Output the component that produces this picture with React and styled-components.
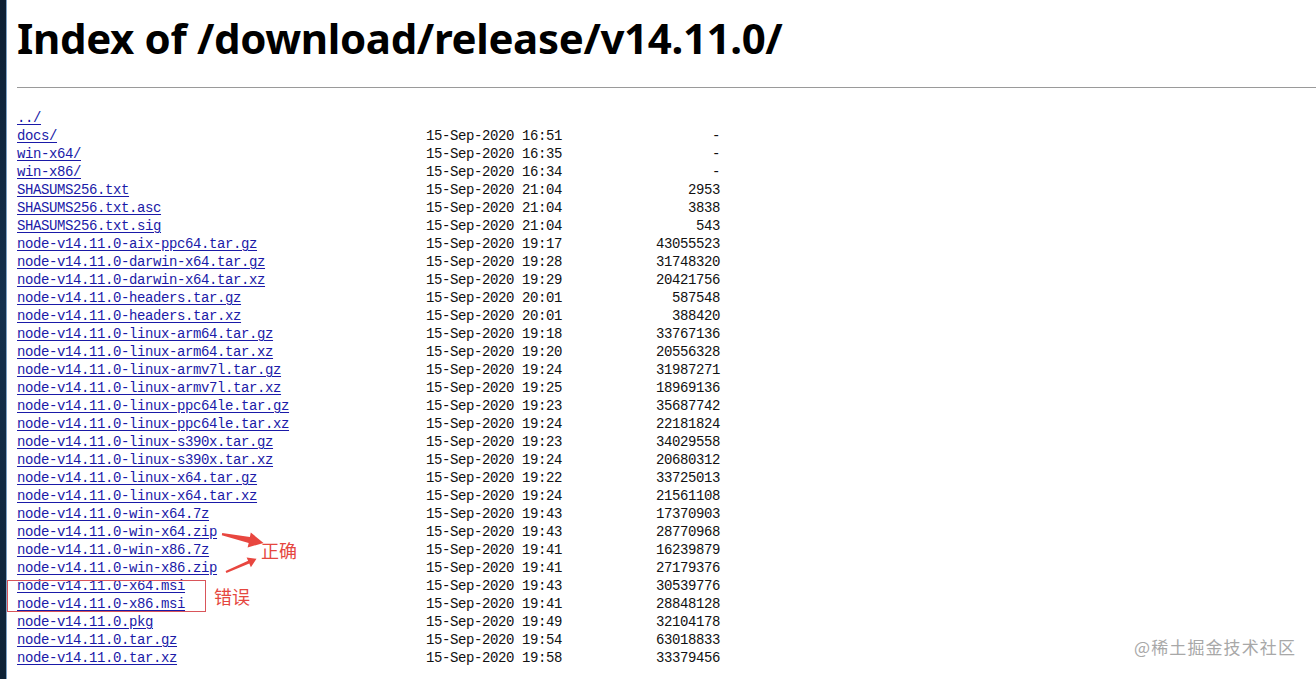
import styled, { createGlobalStyle } from "styled-components";

const GlobalStyle = createGlobalStyle`
  html, body {
    margin: 0;
    padding: 0;
    background: #fff;
  }
  body {
    font-family: "Noto Sans", "Open Sans", sans-serif;
    overflow: hidden;
  }
`;

const files = [
  ["../", "", "", ""],
  ["docs/", "15-Sep-2020", "16:51", "-"],
  ["win-x64/", "15-Sep-2020", "16:35", "-"],
  ["win-x86/", "15-Sep-2020", "16:34", "-"],
  ["SHASUMS256.txt", "15-Sep-2020", "21:04", "2953"],
  ["SHASUMS256.txt.asc", "15-Sep-2020", "21:04", "3838"],
  ["SHASUMS256.txt.sig", "15-Sep-2020", "21:04", "543"],
  ["node-v14.11.0-aix-ppc64.tar.gz", "15-Sep-2020", "19:17", "43055523"],
  ["node-v14.11.0-darwin-x64.tar.gz", "15-Sep-2020", "19:28", "31748320"],
  ["node-v14.11.0-darwin-x64.tar.xz", "15-Sep-2020", "19:29", "20421756"],
  ["node-v14.11.0-headers.tar.gz", "15-Sep-2020", "20:01", "587548"],
  ["node-v14.11.0-headers.tar.xz", "15-Sep-2020", "20:01", "388420"],
  ["node-v14.11.0-linux-arm64.tar.gz", "15-Sep-2020", "19:18", "33767136"],
  ["node-v14.11.0-linux-arm64.tar.xz", "15-Sep-2020", "19:20", "20556328"],
  ["node-v14.11.0-linux-armv7l.tar.gz", "15-Sep-2020", "19:24", "31987271"],
  ["node-v14.11.0-linux-armv7l.tar.xz", "15-Sep-2020", "19:25", "18969136"],
  ["node-v14.11.0-linux-ppc64le.tar.gz", "15-Sep-2020", "19:23", "35687742"],
  ["node-v14.11.0-linux-ppc64le.tar.xz", "15-Sep-2020", "19:24", "22181824"],
  ["node-v14.11.0-linux-s390x.tar.gz", "15-Sep-2020", "19:23", "34029558"],
  ["node-v14.11.0-linux-s390x.tar.xz", "15-Sep-2020", "19:24", "20680312"],
  ["node-v14.11.0-linux-x64.tar.gz", "15-Sep-2020", "19:22", "33725013"],
  ["node-v14.11.0-linux-x64.tar.xz", "15-Sep-2020", "19:24", "21561108"],
  ["node-v14.11.0-win-x64.7z", "15-Sep-2020", "19:43", "17370903"],
  ["node-v14.11.0-win-x64.zip", "15-Sep-2020", "19:43", "28770968"],
  ["node-v14.11.0-win-x86.7z", "15-Sep-2020", "19:41", "16239879"],
  ["node-v14.11.0-win-x86.zip", "15-Sep-2020", "19:41", "27179376"],
  ["node-v14.11.0-x64.msi", "15-Sep-2020", "19:43", "30539776"],
  ["node-v14.11.0-x86.msi", "15-Sep-2020", "19:41", "28848128"],
  ["node-v14.11.0.pkg", "15-Sep-2020", "19:49", "32104178"],
  ["node-v14.11.0.tar.gz", "15-Sep-2020", "19:54", "63018833"],
  ["node-v14.11.0.tar.xz", "15-Sep-2020", "19:58", "33379456"],
];

const App = () => {
  return (
    <Screen>
      <GlobalStyle />
      <Desktop />
      <Page>
        <Title>Index of /download/release/v14.11.0/</Title>
        <Rule />
        <Listing>
          {files.map(([name, date, time, size]) => (
            <Row key={name}>
              <FileLink href="#">{name}</FileLink>
              <Cell>{date ? `${date} ${time}` : ""}</Cell>
              <Size>{size}</Size>
            </Row>
          ))}
        </Listing>
      </Page>

      {/* screenshot annotations */}
      <Marks width="60" height="55" viewBox="215 525 60 55">
        <polygon
          points="222.2,533 249.9,537.1 250.8,532.6 263.5,543 247.6,547.4 248.7,542.9 221.8,535.2"
          fill="#e8463f"
        />
        <polygon
          points="225.6,571 248.1,560.8 246.6,557.4 256.5,558.8 250.9,567.2 249.3,563.6 226.4,573"
          fill="#e8463f"
        />
      </Marks>
      <RightNote>正确</RightNote>
      <WrongBox />
      <WrongNote>错误</WrongNote>
      <Watermark>@稀土掘金技术社区</Watermark>
    </Screen>
  );
};
export default App;

/*Styled Components*/

const Screen = styled.div`
  position: relative;
  display: flex;
  width: 1316px;
  height: 679px;
  overflow: hidden;
  background: #fff;
`;

const Desktop = styled.div`
  flex: 0 0 6px;
  background: linear-gradient(180deg, #0d1f33 0%, #14304d 45%, #0e2236 100%);
  border-right: 1px solid #7fa3c6;
`;

const Page = styled.div`
  flex: 1;
  padding-left: 10px;
`;

const Title = styled.h1`
  margin: 12px 0 0 0;
  font-family: "Noto Sans", "Open Sans", sans-serif;
  font-weight: 700;
  font-size: 42px;
  line-height: 52px;
  color: #000;
  letter-spacing: -0.35px;
`;

const Rule = styled.hr`
  margin: 23px 0 0 0;
  border: none;
  border-top: 1px solid #9a9a9a;
  height: 0;
`;

const Listing = styled.div`
  margin-top: 21px;
  font-family: "Liberation Mono", "DejaVu Sans Mono", monospace;
  font-size: 14px;
  letter-spacing: -0.4px;
  line-height: 18px;
  color: #111;
`;

const Row = styled.div`
  display: grid;
  grid-template-columns: 409px 136px 158px;
  height: 18px;
  white-space: pre;
`;

const FileLink = styled.a`
  color: #1a1aa8;
  text-decoration: underline;
  text-underline-offset: 2px;
  justify-self: start;
`;

const Cell = styled.span``;

const Size = styled.span`
  text-align: right;
`;

const Marks = styled.svg`
  position: absolute;
  left: 215px;
  top: 525px;
`;

const Note = styled.span`
  position: absolute;
  font-family: "Noto Sans CJK SC", sans-serif;
  font-size: 18px;
  line-height: 20px;
  color: #e5473f;
`;

const RightNote = styled(Note)`
  left: 261px;
  top: 540px;
`;

const WrongNote = styled(Note)`
  left: 214px;
  top: 586px;
`;

const WrongBox = styled.div`
  position: absolute;
  left: 7px;
  top: 580px;
  width: 197px;
  height: 30px;
  border: 1px solid #d9555a;
`;

const Watermark = styled.span`
  position: absolute;
  left: 1134px;
  top: 634px;
  font-family: "Noto Sans CJK SC", sans-serif;
  font-size: 17px;
  color: #a8a8a8;
  letter-spacing: 1.1px;
`;
